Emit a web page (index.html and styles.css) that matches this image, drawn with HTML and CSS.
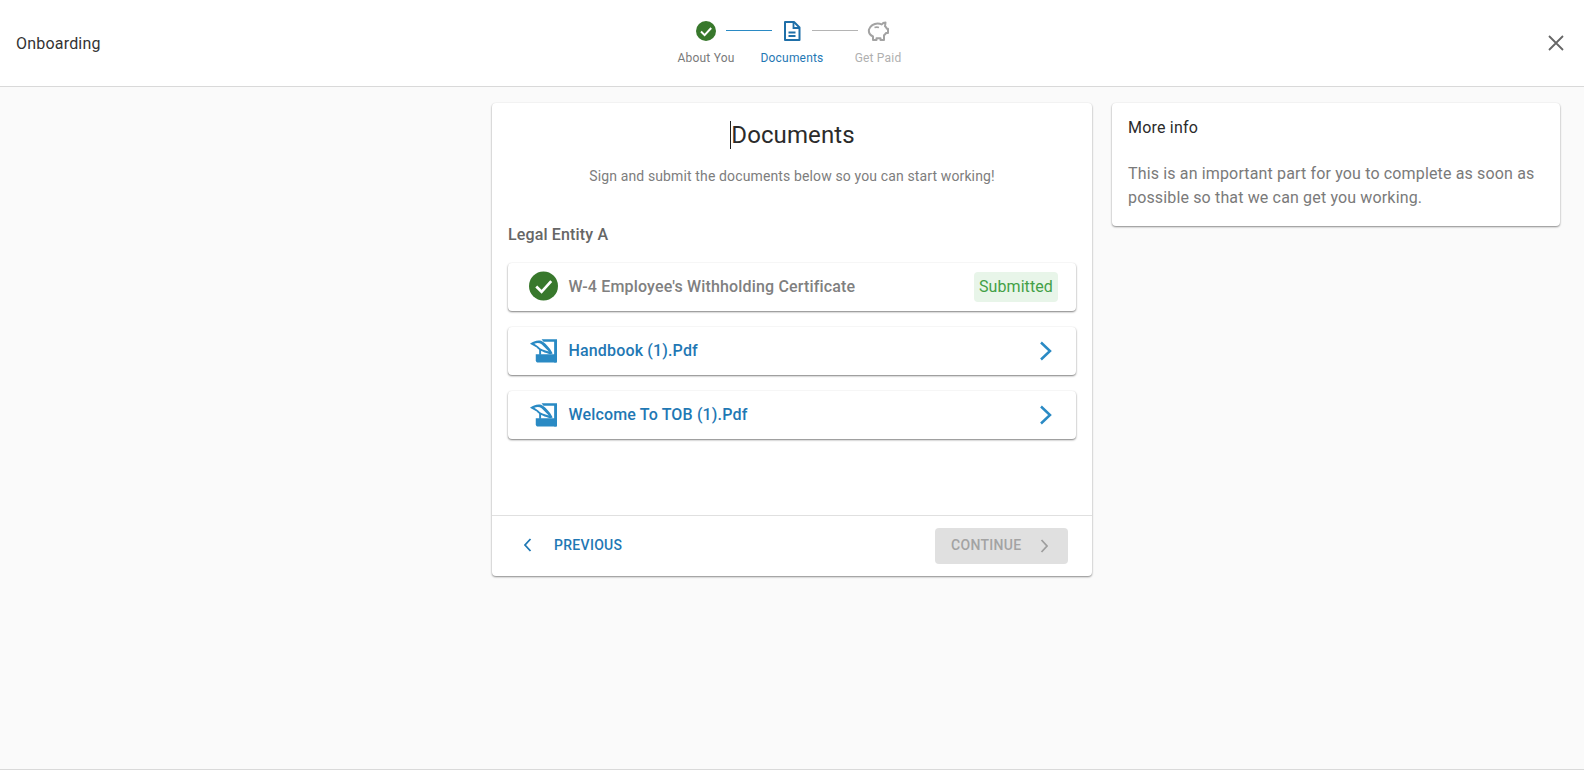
FILE: index.html
```html
<!DOCTYPE html>
<html lang="en">
<head>
<meta charset="utf-8">
<title>Onboarding</title>
<link rel="stylesheet" href="styles.css">
</head>
<body>
<div class="app">
  <header class="topbar">
    <div class="brand">Onboarding</div>
    <nav class="stepper">
      <div class="step step-done">
        <svg class="step-icon" viewBox="0 0 22 22"><circle cx="11" cy="11" r="10" fill="#38782c"/><path d="M6 11.500l3.600 3.600L16.200 8" fill="none" stroke="#fff" stroke-width="2"/></svg>
        <span>About You</span>
      </div>
      <div class="line line-blue"></div>
      <div class="step step-active">
        <svg class="step-icon" viewBox="0 0 22 22"><path d="M4 2h9l5.500 5.500V20H4z" fill="none" stroke="#1f6fa8" stroke-width="2" stroke-linejoin="round"/><path d="M12.500 2v6H18" fill="none" stroke="#1f6fa8" stroke-width="1.800"/><path d="M7.500 12.500h7M7.500 16h7" stroke="#1f6fa8" stroke-width="1.800"/></svg>
        <span>Documents</span>
      </div>
      <div class="line line-grey"></div>
      <div class="step step-todo">
        <svg class="step-icon" viewBox="0 0 22 22"><path d="M2 9.500C3 6 7 3.500 10.500 3.500c1.500 0 3 .3 4.200 1 .8-1.200 2.200-2 3.800-2l-.5 3.800c1 .8 1.500 1.500 1.800 2.400H21v4.300h-2c-.5 1-1.200 1.700-2 2.300V20h-3.500v-1.800h-4V20H6v-3.500C3 15 1.500 12 2 9.500z" fill="none" stroke="#a3a3a3" stroke-width="2" stroke-linejoin="round"/><path d="M7.500 7.500c1.500-.5 3-.5 4.500 0" fill="none" stroke="#a3a3a3" stroke-width="1.500"/></svg>
        <span>Get Paid</span>
      </div>
    </nav>
    <button class="close" aria-label="Close">
      <svg viewBox="0 0 16 16" width="16" height="16"><path d="M1 1l14 14M15 1L1 15" stroke="#666" stroke-width="1.800" fill="none"/></svg>
    </button>
  </header>
  <main class="content">
    <section class="card main-card">
      <div class="card-body">
        <h1 class="title"><span class="caret"></span>Documents</h1>
        <p class="subtitle">Sign and submit the documents below so you can start working!</p>
        <h2 class="entity">Legal Entity A</h2>
        <div class="doc-row">
          <svg class="doc-icon" viewBox="0 0 30 30"><circle cx="15" cy="15" r="15" fill="#38782c"/><path d="M7.500 15.500l5.500 5.500L23 10" fill="none" stroke="#fff" stroke-width="2.800"/></svg>
          <span class="doc-name doc-name-done">W-4 Employee's Withholding Certificate</span>
          <span class="badge">Submitted</span>
        </div>
        <div class="doc-row">
          <svg class="doc-icon" viewBox="0 0 30 30"><use href="#sign"/></svg>
          <span class="doc-name">Handbook (1).Pdf</span>
          <svg class="chevron" viewBox="0 0 14 20"><path d="M2 1.500L11 10l-9 8.500" fill="none" stroke="#2a8ac4" stroke-width="2.500"/></svg>
        </div>
        <div class="doc-row">
          <svg class="doc-icon" viewBox="0 0 30 30"><use href="#sign"/></svg>
          <span class="doc-name">Welcome To TOB (1).Pdf</span>
          <svg class="chevron" viewBox="0 0 14 20"><path d="M2 1.500L11 10l-9 8.500" fill="none" stroke="#2a8ac4" stroke-width="2.500"/></svg>
        </div>
      </div>
      <footer class="card-foot">
        <button class="btn-prev">
          <svg class="btn-chev" viewBox="0 0 8 14"><path d="M6.500 1L1 7l5.500 6" fill="none" stroke="#1f78b4" stroke-width="1.800"/></svg>
          <span>PREVIOUS</span>
        </button>
        <button class="btn-next">
          <span>CONTINUE</span>
          <svg class="btn-chev" viewBox="0 0 8 14"><path d="M1.500 1L7 7l-5.500 6" fill="none" stroke="#9e9e9e" stroke-width="1.800"/></svg>
        </button>
      </footer>
    </section>
    <aside class="card info-card">
      <h3 class="info-title">More info</h3>
      <p class="info-text">This is an important part for you to complete as soon as possible so that we can get you working.</p>
    </aside>
  </main>
</div>
<svg class="defs" width="0" height="0" aria-hidden="true">
  <symbol id="sign" viewBox="0 0 30 30">
    <path d="M13 4h16v24h-3V6.500H15z" fill="#2a8ac4"/>
    <path d="M1 8.500C4 6 9 4.500 12.500 5.500 16 7 21.500 12.500 24.500 18.500L22 19.500C17 18 10.500 16 8 12.500z" fill="#2a8ac4"/>
    <path d="M5.500 8.500C8 7.500 11 7.500 13 9l7.500 7.500C16 15.500 11.500 14 9.500 11.500z" fill="#fff"/>
    <path d="M10.500 14h2v6h-2z" fill="#2a8ac4"/>
    <path d="M7 19.500h21V28H9.500C8 28 7 27 7 25.500z" fill="#2a8ac4"/>
  </symbol>
</svg>
</body>
</html>
```
FILE: styles.css
```css
* { box-sizing: border-box; }
html, body { margin: 0; padding: 0; height: 100%; }
body {
  font-family: Roboto, "Liberation Sans", sans-serif;
  background: #fafafa;
  overflow: hidden;
}
.app {
  height: 770px;
  border-bottom: 1px solid #d9d9d9;
  display: flex;
  flex-direction: column;
}
.topbar {
  height: 87px;
  flex: none;
  background: #fff;
  border-bottom: 1px solid #d9d9d9;
  display: grid;
  grid-template-columns: 1fr auto 1fr;
  align-items: center;
  padding: 0 16px;
}
.brand { font-size: 16px; letter-spacing: 0.2px; color: #333; font-weight: 400; }
.stepper {
  display: flex;
  align-items: flex-start;
  margin-bottom: 2px;
}
.step {
  display: flex;
  flex-direction: column;
  align-items: center;
  font-size: 12px;
  letter-spacing: 0.2px;
  width: 22px;
  white-space: nowrap;
}
.step .step-icon { width: 22px; height: 22px; flex: none; margin-bottom: 9px; }
.step-done { color: #7a7a7a; }
.step-active { color: #1f78b4; }
.step-todo { color: #b0b0b0; }
.line { width: 46px; height: 1px; margin: 10px 9px 0; }
.line-blue { background: #2a8ac4; }
.line-grey { background: #b4b4b4; }
.close {
  justify-self: end;
  background: none;
  border: 0;
  padding: 0;
  margin-right: 4px;
  width: 16px;
  height: 16px;
  display: block;
}
.content {
  flex: 1;
  display: flex;
  align-items: flex-start;
  gap: 20px;
  padding: 16px 24px 0 492px;
}
.card {
  background: #fff;
  border-radius: 4px;
  box-shadow: 0 1px 2px rgba(0,0,0,.45), 0 0 2px rgba(0,0,0,.03);
}
.main-card { width: 600px; height: 473px; display: flex; flex-direction: column; }
.card-body { flex: 1; padding: 0 16px; }
.title {
  margin: 0;
  padding: 18px 0 0 1px;
  text-align: center;
  font-size: 24px;
  line-height: 29px;
  font-weight: 400;
  color: #2b2b2b;
  letter-spacing: 0.1px;
}
.caret {
  display: inline-block;
  width: 1px;
  height: 28px;
  background: #222;
  vertical-align: -6px;
}
.subtitle {
  margin: 16px 0 0;
  text-align: center;
  font-size: 14px;
  line-height: 20px;
  letter-spacing: 0.13px;
  color: #7d7d7d;
}
.entity {
  margin: 38px 0 0;
  font-size: 16px;
  line-height: 22px;
  font-weight: 500;
  letter-spacing: 0.15px;
  color: #666;
}
.doc-row {
  height: 48px;
  margin-top: 16px;
  display: flex;
  align-items: center;
  padding: 0 18px 0 21px;
  border-radius: 4px;
  background: #fff;
  box-shadow: 0 1px 2px rgba(0,0,0,.5), 0 0 2px rgba(0,0,0,.03);
}
.entity + .doc-row { margin-top: 17px; }
.doc-icon { width: 29px; height: 30px; flex: none; margin: 0 10.500px 2px 0; }
.doc-name { flex: 1; font-size: 16px; font-weight: 500; letter-spacing: 0.16px; color: #1f78b4; margin-bottom: 2px; }
.doc-name-done { color: #808080; }
.badge {
  background: #e8f5e9;
  color: #43a047;
  font-size: 16px;
  padding: 0 5px;
  height: 30px;
  line-height: 30px;
  border-radius: 4px;
  letter-spacing: 0.1px;
}
.chevron { width: 14px; height: 20px; margin-right: 5px; flex: none; }
.card-foot {
  height: 61px;
  flex: none;
  border-top: 1px solid #e0e0e0;
  display: flex;
  align-items: center;
  justify-content: space-between;
  padding: 0 24px 0 32px;
}
.btn-prev, .btn-next {
  border: 0;
  font-family: inherit;
  font-size: 14px;
  font-weight: 500;
  letter-spacing: 0.3px;
  display: flex;
  align-items: center;
}
.btn-prev { background: none; color: #1f78b4; padding: 0; gap: 22px; margin-bottom: 2px; }
.btn-next {
  background: #e0e0e0;
  color: #a3a3a3;
  width: 133px;
  height: 36px;
  border-radius: 4px;
  padding: 0 16px 2px;
  gap: 19px;
}
.btn-chev { width: 8px; height: 14px; flex: none; }
.btn-next .btn-chev { margin-top: 2px; }
.info-card { width: 448px; height: 123px; padding: 15px 16px; }
.info-title {
  margin: 0;
  font-size: 16px;
  line-height: 20px;
  font-weight: 400;
  letter-spacing: 0.2px;
  color: #2b2b2b;
}
.info-text {
  margin: 24px 0 0;
  font-size: 16px;
  line-height: 24.400px;
  letter-spacing: 0.15px;
  color: #7a7a7a;
}
.defs { position: absolute; }
```
